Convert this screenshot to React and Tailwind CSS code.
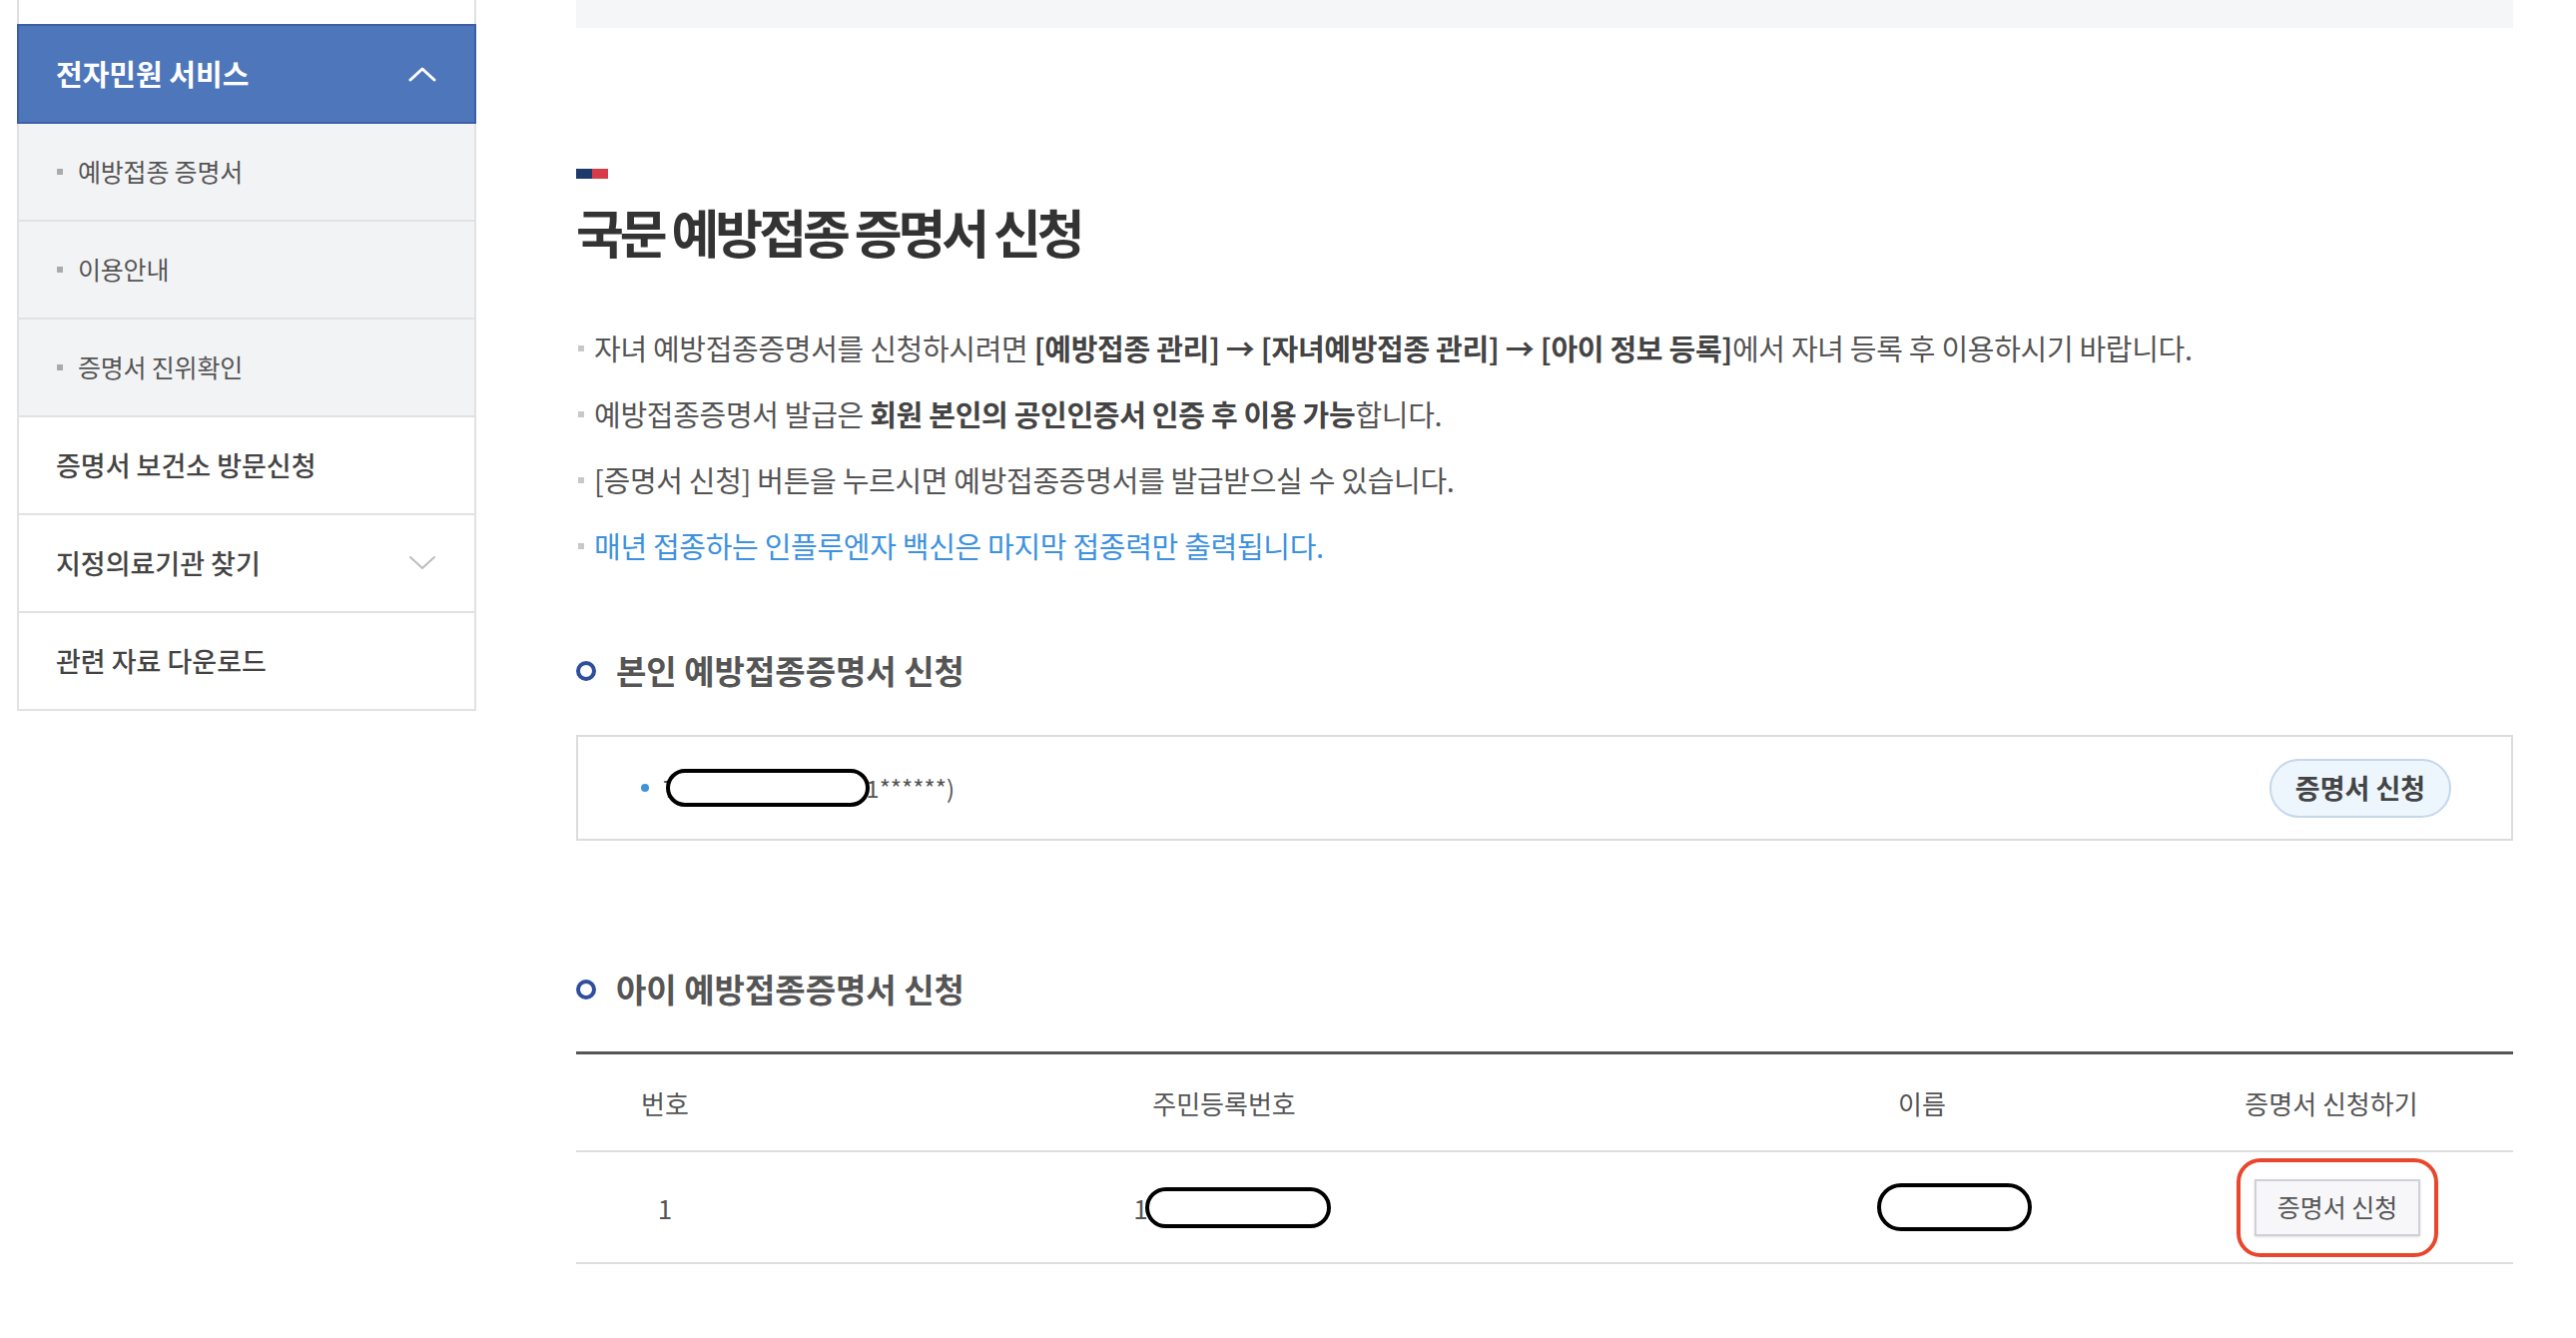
import React from "react";

const Chevron = ({ up, className }) => (
  <svg width="28" height="16" viewBox="0 0 28 16" fill="none" className={className}>
    <path
      d={up ? "M2 14 L14 3 L26 14" : "M2 2 L14 13 L26 2"}
      stroke="currentColor"
      strokeWidth={up ? 3 : 2}
      strokeLinecap="round"
      strokeLinejoin="round"
    />
  </svg>
);

const subMenu = ["예방접종 증명서", "이용안내", "증명서 진위확인"];

const Sidebar = () => (
  <aside className="ml-[17px] w-[460px] shrink-0 self-start">
    <div className="h-[24px] border-x-2 border-[#e0e0e0]" />
    {/* open group header */}
    <div className="h-[100px] bg-[#4e76ba] border-2 border-[#3d5ea7] flex items-center justify-between pl-[37px] pr-[38px]">
      <span className="text-[29px] font-bold text-white">전자민원 서비스</span>
      <Chevron up className="text-white" />
    </div>
    {subMenu.map((label) => (
      <div
        key={label}
        className="h-[98px] bg-[#f2f3f5] border-x-2 border-b-2 border-[#e2e2e2] flex items-center pl-[38px]"
      >
        <span className="w-[6px] h-[6px] bg-[#aaaaaa]" />
        <span className="ml-[15px] text-[25px] text-[#555] tracking-[-0.2px]">{label}</span>
      </div>
    ))}
    <div className="h-[98px] border-x-2 border-b-2 border-[#e2e2e2] flex items-center pl-[37px]">
      <span className="text-[27px] font-medium text-[#444]">증명서 보건소 방문신청</span>
    </div>
    <div className="h-[98px] border-x-2 border-b-2 border-[#e2e2e2] flex items-center justify-between pl-[37px] pr-[38px]">
      <span className="text-[27px] font-medium text-[#444]">지정의료기관 찾기</span>
      <Chevron className="text-[#bdbdbd]" />
    </div>
    <div className="h-[98px] border-x-2 border-b-2 border-[#e2e2e2] flex items-center pl-[37px]">
      <span className="text-[27px] font-medium text-[#444]">관련 자료 다운로드</span>
    </div>
  </aside>
);

const Bullet = ({ children, className = "" }) => (
  <li className={`flex items-center h-[66px] ${className}`}>
    <span className="ml-[2px] w-[6px] h-[6px] bg-[#c8c8c8] shrink-0" />
    <span className="ml-[10px]">{children}</span>
  </li>
);

const SectionTitle = ({ children, className = "" }) => (
  <h3 className={`flex items-center h-[40px] ${className}`}>
    <span className="w-[20px] h-[20px] rounded-full border-4 border-[#2f4f9e]" />
    <span className="ml-[20px] text-[33px] font-bold text-[#555]">{children}</span>
  </h3>
);

export default function App() {
  return (
    <div className="w-[2580px] h-[1340px] bg-white flex overflow-hidden font-['Noto_Sans_CJK_KR','Noto_Sans',sans-serif]">
      <Sidebar />

      <main className="ml-[100px] w-[1940px] shrink-0">
        <div className="h-[28px] bg-[#f5f6f8]" />

        <div className="mt-[141px] flex">
          <span className="w-[16px] h-[10px] bg-[#1d3a6b]" />
          <span className="w-[16px] h-[10px] bg-[#d73b47]" />
        </div>
        <h2 className="mt-[24px] h-[58px] leading-[58px] text-[52px] font-bold text-[#333] tracking-[-4px]">
          국문 예방접종 증명서 신청
        </h2>

        <ul className="mt-[55px] text-[29px] text-[#555] tracking-[-0.3px]">
          <Bullet>
            자녀 예방접종증명서를 신청하시려면{" "}
            <b className="font-bold text-[#444]">[예방접종 관리] → [자녀예방접종 관리] → [아이 정보 등록]</b>
            에서 자녀 등록 후 이용하시기 바랍니다.
          </Bullet>
          <Bullet>
            예방접종증명서 발급은 <b className="font-bold text-[#444]">회원 본인의 공인인증서 인증 후 이용 가능</b>
            합니다.
          </Bullet>
          <Bullet>[증명서 신청] 버튼을 누르시면 예방접종증명서를 발급받으실 수 있습니다.</Bullet>
          <Bullet className="text-[#3d91de]">매년 접종하는 인플루엔자 백신은 마지막 접종력만 출력됩니다.</Bullet>
        </ul>

        <SectionTitle className="mt-[72px]">본인 예방접종증명서 신청</SectionTitle>

        <div className="mt-[44px] h-[106px] border-2 border-[#dcdcdc] flex items-center justify-between pl-[63px] pr-[60px]">
          <div className="flex items-center">
            <span className="w-[8px] h-[8px] rounded-full bg-[#3d94db]" />
            <div className="relative ml-[14px] flex items-center text-[24px] text-[#555]">
              <span>7</span>
              <span className="w-[190px]" />
              <span>1******)</span>
              <span className="absolute left-[3px] top-1/2 -translate-y-1/2 w-[204px] h-[38px] rounded-full border-4 border-black bg-white" />
            </div>
          </div>
          <button className="h-[59px] w-[182px] rounded-full bg-[#edf5fd] border-2 border-[#c5d7ea] text-[27px] font-bold text-[#444]">
            증명서 신청
          </button>
        </div>

        <SectionTitle className="mt-[129px]">아이 예방접종증명서 신청</SectionTitle>

        <div className="mt-[42px] border-t-[3px] border-[#555]">
          <div className="grid grid-cols-[178px_942px_456px_1fr] h-[98px] border-b-2 border-[#dedede] text-[26px] text-[#555]">
            <div className="flex items-center justify-center">번호</div>
            <div className="flex items-center justify-center">주민등록번호</div>
            <div className="flex items-center justify-center">이름</div>
            <div className="flex items-center justify-center">증명서 신청하기</div>
          </div>
          <div className="grid grid-cols-[178px_942px_456px_1fr] h-[112px] border-b-2 border-[#dedede] text-[26px] text-[#555]">
            <div className="flex items-center justify-center">1</div>
            <div className="flex items-center justify-center pl-[16px]">
              <span>1</span>
              <span className="-ml-[3px] w-[186px] h-[41px] rounded-full border-4 border-black bg-white" />
            </div>
            <div className="flex items-center justify-center pl-[64px]">
              <span className="w-[155px] h-[48px] rounded-full border-4 border-black bg-white" />
            </div>
            <div className="flex items-center justify-center pl-[12px]">
              <div className="rounded-[24px] border-4 border-[#e8472d] px-[14px] py-[17px]">
                <button className="h-[57px] w-[166px] bg-[#f7f7f9] border-2 border-[#d0d0d6] shadow-sm text-[25px] text-[#555]">
                  증명서 신청
                </button>
              </div>
            </div>
          </div>
        </div>
      </main>
    </div>
  );
}
